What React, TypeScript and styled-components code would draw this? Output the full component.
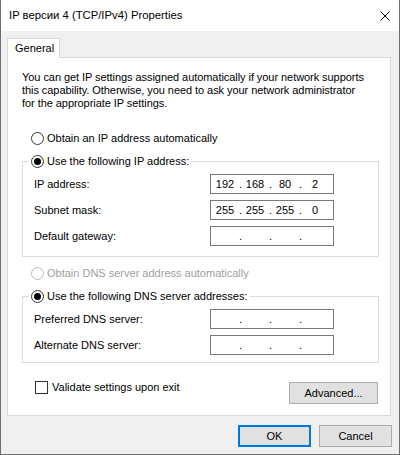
import React from "react";
import styled, { createGlobalStyle } from "styled-components";

const GlobalStyle = createGlobalStyle`
  *, *::before, *::after { box-sizing: border-box; }
  html, body { margin: 0; padding: 0; background: #ffffff; }
  body {
    font-family: "Liberation Sans", Arial, sans-serif;
    font-size: 11px;
    line-height: 13px;
    color: #000000;
  }
`;

const Window = styled.div`
  width: 400px;
  height: 455px;
  display: flex;
  flex-direction: column;
  background: #f0f0f0;
  border-left: 1px solid #6e6e6e;
  border-right: 1px solid #6e6e6e;
  border-bottom: 1px solid #6e6e6e;
`;

const TitleBar = styled.div`
  height: 31px;
  flex: none;
  background: #ffffff;
  display: flex;
  align-items: center;
  justify-content: space-between;
  padding: 0 9px 0 8px;
`;

const Title = styled.span`
  font-size: 11.3px;
  white-space: nowrap;
`;

const CloseGlyph = styled.svg`
  display: block;
  margin-top: 1px;
`;

const Body = styled.div`
  flex: 1;
  display: flex;
  flex-direction: column;
  padding: 7px 8px 0 6px;
`;

const TabStrip = styled.div`
  display: flex;
`;

const Tab = styled.div`
  position: relative;
  z-index: 1;
  height: 20px;
  width: 53px;
  background: #ffffff;
  border: 1px solid #d9d9d9;
  border-bottom: none;
  padding-left: 7px;
  display: flex;
  align-items: center;
`;

const Panel = styled.div`
  height: 359px;
  margin-top: -1px;
  background: #ffffff;
  border: 1px solid #d9d9d9;
  padding: 13px 11px 0 14px;
  display: flex;
  flex-direction: column;
`;

const Intro = styled.p`
  margin: 0;
  white-space: nowrap;
  letter-spacing: -0.06px;
`;

const OptionRow = styled.label<{ $top: number; $disabled?: boolean }>`
  display: flex;
  align-items: center;
  gap: 3px;
  height: 13px;
  margin: ${(p) => p.$top}px 0 0 9px;
  color: ${(p) => (p.$disabled ? "#a0a0a0" : "#000000")};
  white-space: nowrap;
`;

const Radio = styled.span<{ $checked?: boolean; $disabled?: boolean }>`
  flex: none;
  width: 13px;
  height: 13px;
  border-radius: 50%;
  border: 1px solid ${(p) => (p.$disabled ? "#bcbcbc" : "#333333")};
  background: #ffffff;
  display: flex;
  align-items: center;
  justify-content: center;
  &::after {
    content: "";
    display: ${(p) => (p.$checked ? "block" : "none")};
    width: 7px;
    height: 7px;
    border-radius: 50%;
    background: #000000;
  }
`;

const Group = styled.fieldset<{ $top: number }>`
  margin: ${(p) => p.$top}px 0 0 0;
  padding: 0;
  min-width: 0;
  border: 1px solid #dcdcdc;
`;

const GroupLegend = styled.legend`
  margin-left: 6px;
  padding: 0 2px;
`;

const LegendInner = styled.span`
  display: flex;
  align-items: center;
  gap: 3px;
  height: 13px;
  white-space: nowrap;
`;

const Fields = styled.div<{ $bottom: number }>`
  display: grid;
  grid-template-columns: 176px 124px;
  row-gap: 6px;
  align-items: center;
  padding: 6px 0 ${(p) => p.$bottom}px 11px;
`;

const FieldLabel = styled.span`
  white-space: nowrap;
`;

const IpBox = styled.div`
  width: 124px;
  height: 20px;
  border: 1px solid #7a7a7a;
  background: #ffffff;
  padding-left: 1px;
  display: grid;
  grid-template-columns: 26px 4px 26px 4px 26px 4px 26px;
  align-items: center;
`;

const Octet = styled.span`
  text-align: center;
`;

const Dot = styled.span`
  text-align: right;
`;

const BottomRow = styled.div`
  display: flex;
  justify-content: space-between;
  align-items: flex-start;
  margin-top: 18px;
`;

const CheckLabel = styled.label`
  display: flex;
  align-items: center;
  gap: 4px;
  height: 13px;
  margin-left: 13px;
  white-space: nowrap;
`;

const CheckBox = styled.span`
  flex: none;
  width: 13px;
  height: 13px;
  border: 1px solid #333333;
  background: #ffffff;
`;

const Button = styled.button<{ $w: number; $default?: boolean }>`
  width: ${(p) => p.$w}px;
  height: 22px;
  padding: 0;
  font-family: inherit;
  font-size: 11px;
  color: #000000;
  background: #e1e1e1;
  border: 1px solid ${(p) => (p.$default ? "#0078d7" : "#adadad")};
  box-shadow: ${(p) => (p.$default ? "inset 0 0 0 1px #0078d7" : "none")};
`;

const AdvancedButton = styled(Button)`
  margin: 1px 1px 0 0;
`;

const Footer = styled.div`
  display: flex;
  justify-content: flex-end;
  gap: 8px;
  margin: 9px -1px 0 0;
`;

function IpField({ parts }: { parts: string[] }) {
  return (
    <IpBox>
      <Octet>{parts[0]}</Octet>
      <Dot>.</Dot>
      <Octet>{parts[1]}</Octet>
      <Dot>.</Dot>
      <Octet>{parts[2]}</Octet>
      <Dot>.</Dot>
      <Octet>{parts[3]}</Octet>
    </IpBox>
  );
}

export default function App() {
  return (
    <>
      <GlobalStyle />
      <Window>
        <TitleBar>
          <Title>IP версии 4 (TCP/IPv4) Properties</Title>
          <CloseGlyph width="10" height="10" viewBox="0 0 10 10">
            <path d="M0.5 0.5 L9.5 9.5 M9.5 0.5 L0.5 9.5" stroke="#000" strokeWidth="1" fill="none" />
          </CloseGlyph>
        </TitleBar>
        <Body>
          <TabStrip>
            <Tab>General</Tab>
          </TabStrip>
          <Panel>
            <Intro>
              You can get IP settings assigned automatically if your network supports
              <br />
              this capability. Otherwise, you need to ask your network administrator
              <br />
              for the appropriate IP settings.
            </Intro>

            <OptionRow $top={22}>
              <Radio />
              Obtain an IP address automatically
            </OptionRow>

            <Group $top={10}>
              <GroupLegend>
                <LegendInner>
                  <Radio $checked />
                  Use the following IP address:
                </LegendInner>
              </GroupLegend>
              <Fields $bottom={10}>
                <FieldLabel>IP address:</FieldLabel>
                <IpField parts={["192", "168", "80", "2"]} />
                <FieldLabel>Subnet mask:</FieldLabel>
                <IpField parts={["255", "255", "255", "0"]} />
                <FieldLabel>Default gateway:</FieldLabel>
                <IpField parts={["", "", "", ""]} />
              </Fields>
            </Group>

            <OptionRow $top={10} $disabled>
              <Radio $disabled />
              Obtain DNS server address automatically
            </OptionRow>

            <Group $top={10}>
              <GroupLegend>
                <LegendInner>
                  <Radio $checked />
                  Use the following DNS server addresses:
                </LegendInner>
              </GroupLegend>
              <Fields $bottom={7}>
                <FieldLabel>Preferred DNS server:</FieldLabel>
                <IpField parts={["", "", "", ""]} />
                <FieldLabel>Alternate DNS server:</FieldLabel>
                <IpField parts={["", "", "", ""]} />
              </Fields>
            </Group>

            <BottomRow>
              <CheckLabel>
                <CheckBox />
                Validate settings upon exit
              </CheckLabel>
              <AdvancedButton $w={89}>Advanced...</AdvancedButton>
            </BottomRow>
          </Panel>
          <Footer>
            <Button $w={73} $default>OK</Button>
            <Button $w={73}>Cancel</Button>
          </Footer>
        </Body>
      </Window>
    </>
  );
}
